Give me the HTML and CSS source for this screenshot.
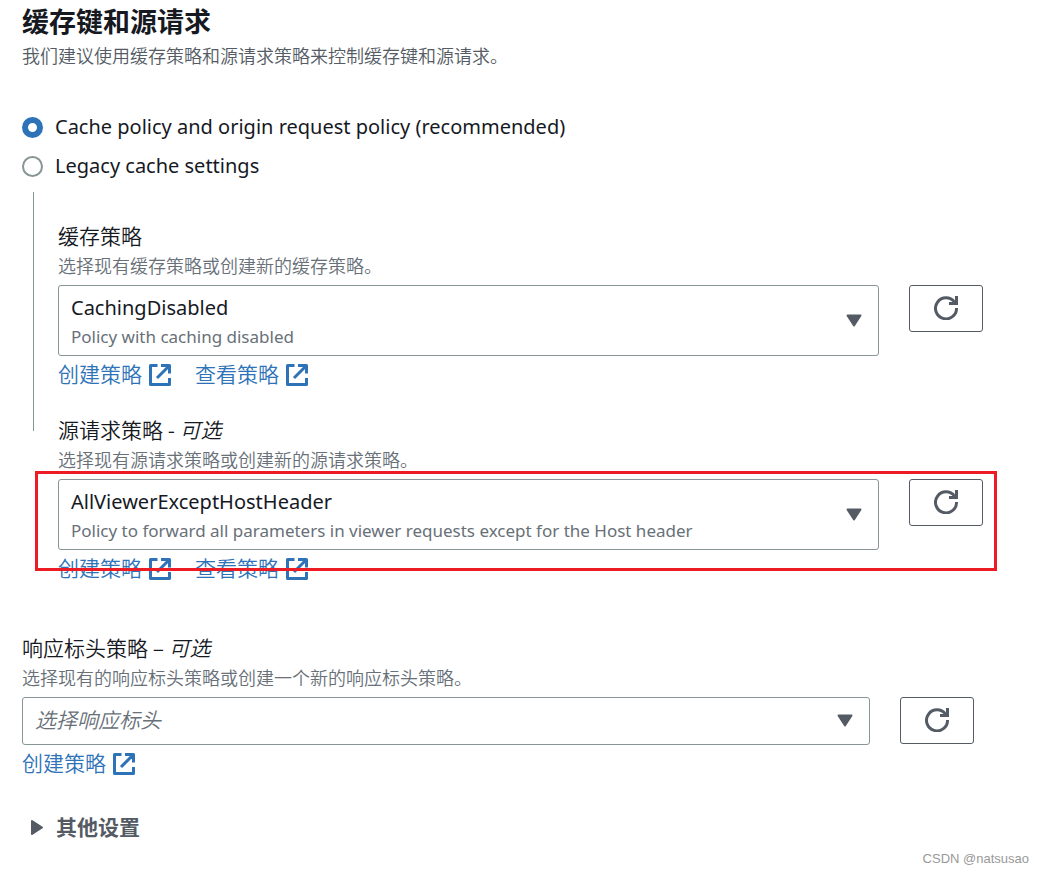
FILE: index.html
```html
<!DOCTYPE html>
<html lang="zh-CN">
<head>
  <meta charset="UTF-8">
  <meta name="viewport" content="width=device-width, initial-scale=1">
  <title>缓存键和源请求</title>
  <link rel="stylesheet" href="styles.css">
</head>
<body>

  <svg class="sprite" aria-hidden="true">
    <symbol id="external" viewBox="0 0 22 22">
      <path d="M8.500 1.500H1.500v19h19V14M12 1.500h8.500V9.500M20 2L8 14" fill="none" stroke="currentColor" stroke-width="3" stroke-linejoin="round"/>
    </symbol>
    <symbol id="refresh" viewBox="0 0 24 24">
      <path d="M22.500 12A10.500 10.500 0 1 1 20.500 6.200M15 7.500h7.500V0" fill="none" stroke="currentColor" stroke-width="3"/>
    </symbol>
    <symbol id="caret" viewBox="0 0 16 13">
      <path d="M1.500 1.500h13L8 11.500z" fill="currentColor" stroke="currentColor" stroke-width="2" stroke-linejoin="round"/>
    </symbol>
  </svg>

  <main class="page">
    <h2 class="title">缓存键和源请求</h2>
    <p class="intro">我们建议使用缓存策略和源请求策略来控制缓存键和源请求。</p>

    <div class="radios">
      <label class="radio"><input type="radio" name="mode" checked>Cache policy and origin request policy (recommended)</label>
      <label class="radio"><input type="radio" name="mode">Legacy cache settings</label>
    </div>

    <div class="nested">
      <div class="field">
        <label class="label" for="cache">缓存策略</label>
        <p class="hint">选择现有缓存策略或创建新的缓存策略。</p>
        <div class="row">
          <div class="select">
            <select id="cache" class="tall" aria-describedby="cache-desc">
              <option>CachingDisabled</option>
            </select>
            <span class="desc" id="cache-desc">Policy with caching disabled</span>
            <svg class="caret"><use href="#caret"/></svg>
          </div>
          <button class="refresh" type="button" aria-label="刷新"><svg><use href="#refresh"/></svg></button>
        </div>
        <div class="links">
          <a href="#">创建策略<svg><use href="#external"/></svg></a>
          <a href="#">查看策略<svg><use href="#external"/></svg></a>
        </div>
      </div>

      <div class="field">
        <label class="label" for="origin">源请求策略 - <em>可选</em></label>
        <p class="hint">选择现有源请求策略或创建新的源请求策略。</p>
        <div class="row marked">
          <div class="select">
            <select id="origin" class="tall" aria-describedby="origin-desc">
              <option>AllViewerExceptHostHeader</option>
            </select>
            <span class="desc" id="origin-desc">Policy to forward all parameters in viewer requests except for the Host header</span>
            <svg class="caret"><use href="#caret"/></svg>
          </div>
          <button class="refresh" type="button" aria-label="刷新"><svg><use href="#refresh"/></svg></button>
        </div>
        <div class="links">
          <a href="#">创建策略<svg><use href="#external"/></svg></a>
          <a href="#">查看策略<svg><use href="#external"/></svg></a>
        </div>
      </div>
    </div>

    <div class="field response">
      <label class="label" for="response">响应标头策略 – <em>可选</em></label>
      <p class="hint">选择现有的响应标头策略或创建一个新的响应标头策略。</p>
      <div class="row">
        <div class="select">
          <select id="response" class="empty">
            <option>选择响应标头</option>
          </select>
          <svg class="caret"><use href="#caret"/></svg>
        </div>
        <button class="refresh" type="button" aria-label="刷新"><svg><use href="#refresh"/></svg></button>
      </div>
      <div class="links">
        <a href="#">创建策略<svg><use href="#external"/></svg></a>
      </div>
    </div>

    <button class="more" type="button" aria-expanded="false"><svg><use href="#caret"/></svg>其他设置</button>
  </main>

  <div class="watermark">CSDN @natsusao</div>

</body>
</html>
```

FILE: styles.css
```css
* {
  box-sizing: border-box;
}

body {
  margin: 0;
  background: #fff;
  color: #16191f;
  font-family: "Noto Sans", "Noto Sans CJK SC", sans-serif;
  font-size: 20px;
  line-height: 30px;
}

.sprite {
  display: none;
}

.page {
  padding: 4px 60px 31px 22px;
}

.title {
  margin: 0;
  font-size: 27px;
  line-height: 36px;
  font-weight: 700;
}

.intro,
.hint {
  margin: 1px 0 0;
  font-family: "Noto Sans CJK SC", sans-serif;
  font-size: 18px;
  line-height: 28px;
  font-weight: 350;
  color: #545b64;
}

.hint {
  color: #687078;
}

.radios {
  display: flex;
  flex-direction: column;
  gap: 9px;
  margin-top: 43px;
}

.radio {
  display: flex;
  align-items: center;
  gap: 12px;
}

.radio input {
  appearance: none;
  width: 21px;
  height: 21px;
  margin: 0;
  border: 2px solid #879596;
  border-radius: 50%;
  background: #fff;
}

.radio input:checked {
  border: 6px solid #2e73b8;
}

.nested {
  position: relative;
  display: flex;
  flex-direction: column;
  gap: 28px;
  margin-top: 11px;
  padding: 28px 0 0 36px;
}

/* guide line hanging under the radio buttons */
.nested::before {
  content: "";
  position: absolute;
  top: 0;
  left: 11px;
  height: 239px;
  border-left: 1px solid #879596;
}

.label {
  display: block;
  font-family: "Noto Sans CJK SC", sans-serif;
  font-size: 21px;
  font-weight: 350;
}

.row {
  position: relative;
  display: flex;
  align-items: flex-start;
  gap: 30px;
  margin-top: 6px;
}

.marked::after {
  content: "";
  position: absolute;
  inset: -8px -14px -21px -23px;
  border: 3px solid #ed1c24;
  pointer-events: none;
  z-index: 1;
}

.select {
  position: relative;
  flex: 1;
  display: flex;
}

.select select {
  appearance: none;
  width: 100%;
  height: 48px;
  padding: 0 48px 4px 12px;
  border: 1px solid #879596;
  border-radius: 3px;
  background: #fff;
  color: #16191f;
  font: inherit;
}

.select .tall {
  height: 71px;
  padding-bottom: 26px;
}

.select .empty {
  font-family: "Noto Sans CJK SC", sans-serif;
  font-size: 21px;
  font-weight: 350;
  font-style: italic;
  color: #687078;
}

.desc {
  position: absolute;
  left: 13px;
  bottom: 6px;
  font-size: 17px;
  line-height: 26px;
  color: #687078;
  pointer-events: none;
}

.caret {
  position: absolute;
  top: 50%;
  right: 17px;
  width: 16px;
  height: 13px;
  margin-top: -7px;
  color: #545b64;
  pointer-events: none;
}

.refresh {
  display: flex;
  justify-content: center;
  width: 74px;
  height: 47px;
  padding: 10px 0;
  border: 1px solid #545b64;
  border-radius: 3px;
  background: #fff;
  color: #545b64;
}

.refresh svg {
  width: 24px;
  height: 24px;
}

.links {
  display: flex;
  gap: 24px;
  margin-top: 4px;
}

.links a {
  display: flex;
  align-items: flex-end;
  gap: 7px;
  font-family: "Noto Sans CJK SC", sans-serif;
  font-size: 21px;
  line-height: 26px;
  font-weight: 350;
  color: #2e73b8;
  text-decoration: none;
}

.links svg {
  width: 22px;
  height: 22px;
}

.response {
  margin-top: 52px;
  padding-right: 9px;
}

.more {
  display: flex;
  align-items: center;
  gap: 11px;
  margin-top: 37px;
  padding: 0 7px;
  border: 0;
  background: none;
  color: #545b64;
  font: inherit;
  font-size: 21px;
  font-weight: 700;
}

.more svg {
  width: 16px;
  height: 13px;
  transform: rotate(-90deg);
}

.watermark {
  position: absolute;
  right: 14px;
  bottom: 5px;
  font-family: "Liberation Sans", sans-serif;
  font-size: 13px;
  line-height: 20px;
  color: #999;
}
```
